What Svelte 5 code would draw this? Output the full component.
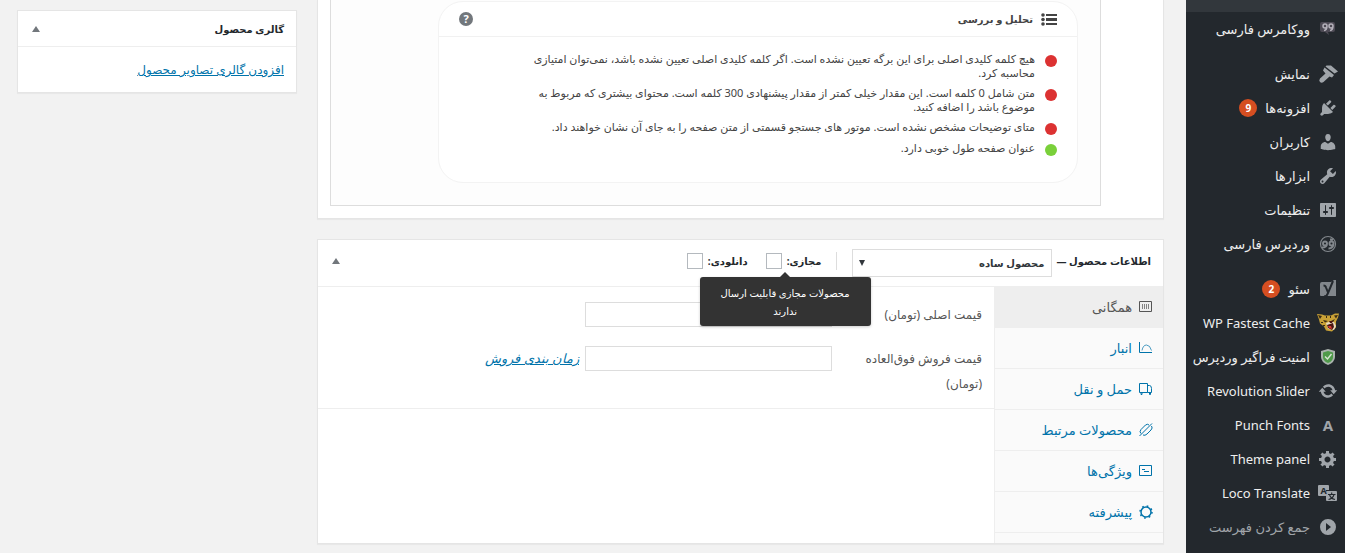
<script>
  const menu = [
    { label: 'ووکامرس فارسی', icon: 'woo' },
    { label: 'نمایش', icon: 'appearance', gap: true },
    { label: 'افزونه‌ها', icon: 'plugins', count: 9 },
    { label: 'کاربران', icon: 'users' },
    { label: 'ابزارها', icon: 'tools' },
    { label: 'تنظیمات', icon: 'settings' },
    { label: 'وردپرس فارسی', icon: 'wpfa' },
    { label: 'سئو', icon: 'yoast', count: 2, gap: true },
    { label: 'WP Fastest Cache', icon: 'cheetah' },
    { label: 'امنیت فراگیر وردپرس', icon: 'shield' },
    { label: 'Revolution Slider', icon: 'update' },
    { label: 'Punch Fonts', icon: 'letter' },
    { label: 'Theme panel', icon: 'generic' },
    { label: 'Loco Translate', icon: 'translation' },
  ];

  // dashicons, 20x20
  const paths = {
    appearance:
      'M8.500 1.500L13 1.500l7 6-3.500 2-9-7zM6.500 3.500l9.500 7.500-2 2.500-2.500-1-6 5.500q-2 1.500-3.500 0t0-3.500l5.500-5-2.500-3z',
    plugins:
      'M13.11 4.36L9.87 7.6 8 5.73l3.24-3.24c.35-.34 1.05-.2 1.56.32.52.51.66 1.21.31 1.55zm-8 1.77l.91-1.12 9.01 9.01-1.19.84c-.71.71-2.63 1.16-3.82 1.16H6.14L4.9 17.26c-.59.59-1.54.59-2.12 0-.59-.58-.59-1.53 0-2.12l1.24-1.24v-3.88c0-1.13.4-3.19 1.09-3.89zm7.26 3.97l3.24-3.24c.34-.35 1.04-.21 1.55.31.52.51.66 1.21.31 1.55l-3.24 3.25z',
    users:
      'M10 9.25c-2.27 0-2.73-3.44-2.73-3.44C7 4.02 7.82 2 9.97 2c2.16 0 2.98 2.02 2.71 3.81 0 0-.41 3.44-2.68 3.44zm0 2.57L12.72 10c2.39 0 4.52 2.33 4.52 4.53v2.49s-3.65 1.13-7.24 1.13c-3.65 0-7.24-1.13-7.24-1.13v-2.49c0-2.25 1.94-4.48 4.47-4.48z',
    tools:
      'M16.68 9.77c-1.34 1.34-3.3 1.67-4.95.99l-5.41 6.52c-.99.99-2.59.99-3.58 0s-.99-2.59 0-3.57l6.52-5.42c-.68-1.65-.35-3.61.99-4.95 1.28-1.28 3.12-1.62 4.72-1.06l-2.89 2.89 2.82 2.82 2.86-2.87c.53 1.58.18 3.39-1.08 4.65zM3.81 16.21c.4.39 1.04.39 1.43 0 .4-.4.4-1.04 0-1.43-.39-.4-1.03-.4-1.43 0-.39.39-.39 1.03 0 1.43z',
    settings:
      'M18 16V4c0-.55-.45-1-1-1H3c-.55 0-1 .45-1 1v12c0 .55.45 1 1 1h14c.55 0 1-.45 1-1zM8 11h1c.55 0 1 .45 1 1s-.45 1-1 1H8v1.5c0 .28-.22.5-.5.5s-.5-.22-.5-.5V13H6c-.55 0-1-.45-1-1s.45-1 1-1h1V5.5c0-.28.22-.5.5-.5s.5.22.5.5V11zm5-2h-1c-.55 0-1-.45-1-1s.45-1 1-1h1V5.5c0-.28.22-.5.5-.5s.5.22.5.5V7h1c.55 0 1 .45 1 1s-.45 1-1 1h-1v5.5c0 .28-.22.5-.5.5s-.5-.22-.5-.5V9z',
    update:
      'M10.2 3.28c3.53 0 6.43 2.61 6.92 6h2.08l-3.5 4-3.5-4h2.32c-.45-1.97-2.21-3.45-4.32-3.45-1.45 0-2.73.71-3.54 1.78L4.95 5.66C6.23 4.2 8.11 3.28 10.2 3.28zm-.4 13.44c-3.52 0-6.43-2.61-6.92-6H.8l3.5-4c1.17 1.33 2.33 2.67 3.5 4H5.48c.45 1.97 2.21 3.45 4.32 3.45 1.45 0 2.73-.71 3.54-1.78l1.71 1.95c-1.28 1.46-3.15 2.38-5.25 2.38z',
    generic:
      'M18 12h-2.18c-.17.7-.44 1.35-.81 1.93l1.54 1.54-2.1 2.1-1.54-1.54c-.58.36-1.23.63-1.91.79V19H8v-2.18c-.68-.16-1.33-.43-1.91-.79l-1.54 1.54-2.12-2.12 1.54-1.54c-.36-.58-.63-1.23-.79-1.91H1V9.03h2.17c.16-.7.44-1.35.8-1.94L2.43 5.55l2.1-2.1 1.54 1.54c.58-.37 1.24-.64 1.93-.81V2h3v2.18c.68.16 1.33.43 1.91.79l1.54-1.54 2.12 2.12-1.54 1.54c.36.59.64 1.24.8 1.94H18V12zm-8.5 1.5c1.66 0 3-1.34 3-3s-1.34-3-3-3-3 1.34-3 3 1.34 3 3 3z',
  };

  const analysis = [
    {
      score: 'bad',
      lines: [
        'هیچ کلمه کلیدی اصلی برای این برگه تعیین نشده است. اگر کلمه کلیدی اصلی تعیین نشده باشد، نمی‌توان امتیازی',
        'محاسبه کرد.',
      ],
    },
    {
      score: 'bad',
      lines: [
        'متن شامل 0 کلمه است. این مقدار خیلی کمتر از مقدار پیشنهادی 300 کلمه است. محتوای بیشتری که مربوط به',
        'موضوع باشد را اضافه کنید.',
      ],
    },
    {
      score: 'bad',
      lines: ['متای توضیحات مشخص نشده است. موتور های جستجو قسمتی از متن صفحه را به جای آن نشان خواهند داد.'],
    },
    { score: 'good', lines: ['عنوان صفحه طول خوبی دارد.'] },
  ];

  const tabs = [
    { id: 'general', label: 'همگانی' },
    { id: 'inventory', label: 'انبار' },
    { id: 'shipping', label: 'حمل و نقل' },
    { id: 'linked', label: 'محصولات مرتبط' },
    { id: 'attributes', label: 'ویژگی‌ها' },
    { id: 'advanced', label: 'پیشرفته' },
  ];

  let activeTab = 'general';
  let regularPrice = '';
  let salePrice = '';
</script>

<div class="admin" dir="rtl" lang="fa">
  <nav class="menu">
    <div class="menu-current"></div>
    <ul>
      {#each menu as item}
        <li class:gap={item.gap}>
          <a href="#{item.icon}">
            <svg class="menu-icon {item.icon}" viewBox="0 0 20 20" aria-hidden="true">
              {#if paths[item.icon]}
                <path d={paths[item.icon]} />
              {:else if item.icon === 'woo'}
                <path d="M4 3h11q2 0 2 2v6q0 2-2 2h-5l1 3-4-3H4q-2 0-2-2V5q0-2 2-2z" fill="#4d4a54" />
                <path d="M9 7a2 2 0 1 0-2 2q2 0 2-2 0 4-3 4.500M15 7a2 2 0 1 0-2 2q2 0 2-2 0 4-3 4.500" fill="none" stroke="#b4b1ba" stroke-width="1.500" />
              {:else if item.icon === 'wpfa'}
                <circle cx="10" cy="10" r="7.500" fill="none" stroke="#82878c" stroke-width="1.200" />
                <path d="M9 9.500a2 2 0 1 0-2 2q2 0 2-2 0 4-5 4M15.500 9.500a2 2 0 1 0-2 2q2 0 2-2 0 5-5 5M12 5.500h3" fill="none" stroke="#82878c" stroke-width="1.900" />
              {:else if item.icon === 'yoast'}
                <path d="M4 3h9l3-2h2v16H3q-1 0-1-1V5q0-2 2-2z" fill="#82878c" />
                <path d="M5.500 6.500q2 0 2.500 2l2 5M15 2l-5 12q-1 3.500-4 3.500" fill="none" stroke="#23282d" stroke-width="2" />
              {:else if item.icon === 'cheetah'}
                <path d="M-1 1l5 .5 3 1h6l4-2 4 0-1 4-2 4v6l-4 4-6-1-2-4-4-3-1-4z" fill="#c9a136" />
                <path d="M0 2l4 1-2 3zM20 2l-4 .5 2 3zM5 7l5 1-3 1.500zM13 8l4-2-2 3zM8 3h1v2H8zM12 3h1v2h-1zM3 9h2v1H3zM5 12h2v1H5z" fill="#3a2c14" />
                <path d="M8 10l3-1 5 0 2 4-2 4-6-1z" fill="#e8dcc0" />
                <path d="M11 8h4l-1 2h-2zM9 12l6-2 1 4-2 3-4-2z" fill="#4b1712" />
                <path d="M10 13l3 0 1 3-3-1z" fill="#d93a30" />
              {:else if item.icon === 'shield'}
                <path d="M10 2l7 2v6q0 5-7 8-7-3-7-8V4z" fill="#a9b3ad" />
                <path d="M10 4l5 1.500V10q0 4-5 6-5-2-5-6V5.500z" fill="#4f9a4a" />
                <path d="M7 9.500l2.500 2.500L13.500 7" fill="none" stroke="#d6e6d2" stroke-width="1.400" />
              {:else if item.icon === 'letter'}
                <text x="10" y="15.500" text-anchor="middle" font-size="15" font-weight="700">A</text>
              {:else}
                <path d="M1 2h9q1 0 1 1v4H8v6H1q-1 0-1-1V3q0-1 1-1z" />
                <path d="M9 8h9q1 0 1 1v8q0 1-1 1H9q-1 0-1-1V9q0-1 1-1z" />
                <text x="5.500" y="11" text-anchor="middle" font-size="9" font-weight="700" fill="#23282d">A</text>
                <path d="M10 11.500h7.500M13.700 9.500v2M16 11.500q-1 4-5.500 5M11.500 11.500q1 4 5.500 5" fill="none" stroke="#23282d" stroke-width="1.100" />
              {/if}
            </svg>
            <span>{item.label}</span>
            {#if item.count}<span class="count">{item.count}</span>{/if}
          </a>
        </li>
      {/each}
    </ul>
    <button class="collapse">
      <svg class="menu-icon" viewBox="0 0 20 20" aria-hidden="true">
        <path fill-rule="evenodd" d="M10 2a8 8 0 1 1 0 16 8 8 0 0 1 0-16zM8 6v8l5-4z" />
      </svg>
      <span>جمع کردن فهرست</span>
    </button>
  </nav>

  <main class="content">
    <div class="primary">
      <section class="postbox seo">
        <div class="seo-inner">
          <div class="analysis">
            <header>
              <svg class="list-icon" viewBox="0 0 16 13" aria-hidden="true">
                <path d="M5 1h11v2H5zM5 5h11v3H5zM5 10h11v2H5z" />
                <circle cx="2" cy="2" r="1.800" /><circle cx="2" cy="6.500" r="1.800" /><circle cx="2" cy="11" r="1.800" />
              </svg>
              <h3>تحلیل و بررسی</h3>
              <button class="help" aria-label="راهنما">?</button>
            </header>
            <ul>
              {#each analysis as result}
                <li>
                  <span class="dot {result.score}"></span>
                  <p>
                    {#each result.lines as line}<span class="line">{line}</span>{/each}
                  </p>
                </li>
              {/each}
            </ul>
          </div>
        </div>
      </section>

      <section class="postbox product">
        <header class="product-head">
          <h2>اطلاعات محصول —</h2>
          <select aria-label="نوع محصول">
            <option>محصول ساده</option>
          </select>
          <div class="types">
            <label class="virtual">
              مجازی:
              <input type="checkbox" />
              <span class="tip" role="tooltip">محصولات مجازی قابلیت ارسال ندارند</span>
            </label>
            <label>
              دانلودی:
              <input type="checkbox" />
            </label>
          </div>
          <button class="toggle" aria-label="بستن">
            <svg viewBox="0 0 8 6" aria-hidden="true"><path d="M4 0l4 6H0z" /></svg>
          </button>
        </header>

        <div class="product-body">
          <ul class="tabs">
            {#each tabs as tab}
              <li>
                <button class:active={activeTab === tab.id} on:click={() => (activeTab = tab.id)}>
                  <svg viewBox="0 0 14 14" aria-hidden="true">
                    {#if tab.id === 'general'}
                      <path d="M.5 1.500h12v10H.5z" />
                      <path d="M3.500 4v5M5.500 4v5M7.500 4v5M9.500 4v5" opacity=".7" />
                    {:else if tab.id === 'inventory'}
                      <path d="M.5 1v10.500H13" />
                      <path d="M3 9.500q1-5.500 4.500-5.500t5 5.500" opacity=".7" />
                    {:else if tab.id === 'shipping'}
                      <path d="M.5 1.500h8v9h-8zM8.500 3.500h2q2 0 2 3v4h-4M2 10.500v2h1v-2M10.500 10.500v2h1v-2" />
                    {:else if tab.id === 'linked'}
                      <path d="M.5 13L13 .5M2 10.500q-2-1.500 0-4l4.500-4.500q2-1.500 3.500 0M4 12q2 1 4-1l4-4q2-2 .5-4" />
                    {:else if tab.id === 'attributes'}
                      <path d="M.5 1.500h12v10H.5zM3 5.500h3M5 7.500h5" />
                    {:else}
                      <circle cx="7" cy="7" r="5" stroke-width="1.500" />
                      <circle cx="7" cy="7" r="6" stroke-width="1.500" stroke-dasharray="1.700 3.010" />
                    {/if}
                  </svg>
                  {tab.label}
                </button>
              </li>
            {/each}
          </ul>
          <div class="panel">
            <div class="fields">
              <div class="field">
                <label for="regular">قیمت اصلی (تومان)</label>
                <input id="regular" type="text" bind:value={regularPrice} />
              </div>
              <div class="field">
                <label for="sale">قیمت فروش فوق‌العاده (تومان)</label>
                <input id="sale" type="text" bind:value={salePrice} />
                <a href="#schedule">زمان بندی فروش</a>
              </div>
            </div>
          </div>
        </div>
      </section>
    </div>

    <aside>
      <section class="postbox gallery">
        <header>
          <h2>گالری محصول</h2>
          <button class="toggle" aria-label="بستن">
            <svg viewBox="0 0 8 6" aria-hidden="true"><path d="M4 0l4 6H0z" /></svg>
          </button>
        </header>
        <div class="gallery-body">
          <a href="#gallery">افزودن گالری تصاویر محصول</a>
        </div>
      </section>
    </aside>
  </main>
</div>

<style>
  :global(body) {
    margin: 0;
    background: #f2f2f2;
  }

  .admin {
    display: flex;
    min-height: 100vh;
    font-family: 'Noto Sans', 'DejaVu Sans', sans-serif;
    font-size: 12px;
    color: #444;
  }

  .admin *,
  .admin {
    box-sizing: border-box;
  }

  ul {
    margin: 0;
    padding: 0;
    list-style: none;
  }

  h2,
  h3,
  p {
    margin: 0;
  }

  button {
    padding: 0;
    border: 0;
    background: none;
    font: inherit;
    color: inherit;
    cursor: pointer;
  }

  a {
    color: #0073aa;
  }

  .menu {
    flex: none;
    width: 159px;
    background: #23282d;
  }

  .menu-current {
    height: 12px;
    background: #32373c;
  }

  .menu .gap {
    margin-top: 11px;
  }

  .menu a,
  .collapse {
    display: flex;
    align-items: center;
    gap: 8px;
    width: 100%;
    height: 34px;
    padding-right: 7px;
    font-size: 13px;
    white-space: nowrap;
    color: #eee;
    text-decoration: none;
  }

  .menu .collapse {
    color: #a0a5aa;
  }

  .menu-icon {
    flex: none;
    width: 20px;
    height: 20px;
    fill: #a0a5aa;
  }

  .menu-icon.cheetah {
    overflow: visible;
  }

  .count {
    width: 18px;
    height: 18px;
    border-radius: 9px;
    background: #d54e21;
    font-size: 10px;
    font-weight: 700;
    line-height: 18px;
    text-align: center;
    color: #fff;
  }

  .content {
    display: flex;
    flex: 1;
    align-items: flex-start;
    gap: 20px;
    min-width: 0;
    padding: 0 22px 0 17px;
  }

  .primary {
    flex: 1;
    min-width: 0;
  }

  aside {
    flex: none;
    width: 280px;
    padding-top: 10px;
  }

  .postbox {
    border: 1px solid #e5e5e5;
    background: #fff;
    box-shadow: 0 1px 1px rgba(0, 0, 0, 0.04);
  }

  .postbox h2 {
    font-size: 10px;
    font-weight: 700;
    color: #23282d;
    white-space: nowrap;
  }

  .seo {
    padding: 0 62px 12px 12px;
    border-top: 0;
  }

  .seo-inner {
    padding: 1px 22px 22px 107px;
    border: 1px solid #ddd;
    border-top: 0;
    background: #fdfdfd;
  }

  .analysis {
    height: 182px;
    border: 1px solid #f3f3f3;
    border-radius: 25px;
    background: #fff;
  }

  .analysis header {
    display: flex;
    align-items: center;
    gap: 8px;
    height: 35px;
    padding: 0 20px;
    border-bottom: 1px solid #f1f1f1;
  }

  .list-icon {
    width: 16px;
    height: 13px;
    fill: #444;
  }

  .analysis h3 {
    font-size: 10px;
    font-weight: 700;
  }

  .help {
    width: 14px;
    height: 14px;
    margin-right: auto;
    border-radius: 50%;
    background: #72777c;
    font-size: 11px;
    font-weight: 700;
    line-height: 14px;
    color: #fff;
  }

  .analysis ul {
    padding: 15px 20px;
  }

  .analysis li {
    display: flex;
    align-items: flex-start;
    gap: 10px;
    margin-bottom: 6px;
  }

  .dot {
    flex: none;
    width: 12px;
    height: 12px;
    margin-top: 3px;
    border-radius: 50%;
  }

  .bad {
    background: #dc3232;
  }

  .good {
    background: #7ad03a;
  }

  .analysis p {
    font-size: 11px;
    line-height: 14px;
  }

  .line {
    display: block;
    white-space: nowrap;
  }

  .product {
    margin-top: 20px;
  }

  .product-head {
    display: flex;
    align-items: center;
    height: 47px;
    padding: 0 12px 4px 14px;
    border-bottom: 1px solid #eee;
  }

  select {
    appearance: none;
    width: 200px;
    height: 28px;
    margin: 4px 5px 0 0;
    padding: 0 6px;
    border: 1px solid #ddd;
    border-radius: 0;
    background: #fff url("data:image/svg+xml,%3Csvg xmlns='http://www.w3.org/2000/svg' viewBox='0 0 6 6'%3E%3Cpath d='M0 0h6L3 6z' fill='%2332373c'/%3E%3C/svg%3E") no-repeat 6px 50% / 6px 6px;
    font: inherit;
    font-size: 10px;
    font-weight: 700;
    color: #32373c;
  }

  .types {
    display: flex;
    gap: 18px;
    height: 18px;
    margin-right: 15px;
    padding-right: 14px;
    border-right: 1px solid #ddd;
  }

  .types label {
    display: flex;
    align-items: center;
    gap: 5px;
    font-size: 10px;
    font-weight: 700;
    color: #23282d;
    white-space: nowrap;
  }

  .virtual {
    position: relative;
  }

  .types input {
    appearance: none;
    width: 16px;
    height: 16px;
    margin: 0;
    border: 1px solid #b4b9be;
    background: #fff;
  }

  .tip {
    position: absolute;
    top: 25px;
    left: -66px;
    z-index: 1;
    width: 171px;
    padding: 7px 16px 6px;
    border-radius: 3px;
    background: #333;
    box-shadow: 0 1px 3px rgba(0, 0, 0, 0.2);
    font-size: 10px;
    font-weight: 400;
    line-height: 18px;
    text-align: center;
    white-space: normal;
    color: #fff;
  }

  .tip::before {
    content: '';
    position: absolute;
    top: -5px;
    left: 80px;
    border: 5px solid transparent;
    border-top: 0;
    border-bottom-color: #333;
  }

  .toggle {
    display: flex;
    margin-right: auto;
  }

  .toggle svg {
    width: 8px;
    height: 6px;
    fill: #72777c;
  }

  .product-body {
    display: flex;
  }

  .tabs {
    flex: none;
    width: 169px;
    padding-bottom: 10px;
    border-left: 1px solid #eee;
    background: #fafafa;
  }

  .tabs button {
    display: flex;
    align-items: center;
    gap: 7px;
    width: 100%;
    height: 41px;
    padding: 0 10px;
    border-bottom: 1px solid #eee;
    font-size: 13px;
    color: #0073aa;
  }

  .tabs .active {
    background: #eee;
    color: #555;
  }

  .tabs svg {
    width: 14px;
    height: 14px;
    fill: none;
    stroke: currentColor;
  }

  .panel {
    flex: 1;
  }

  .fields {
    height: 122px;
    padding: 15px 12px 0;
    border-bottom: 1px solid #eee;
  }

  .field {
    display: flex;
    align-items: flex-start;
    margin-bottom: 19px;
    line-height: 25px;
  }

  .field label {
    width: 150px;
    padding-left: 30px;
    color: #555;
  }

  .field input {
    width: 247px;
    height: 25px;
    padding: 3px;
    border: 1px solid #ddd;
    font: inherit;
  }

  .field a {
    margin-right: 6px;
    font-size: 13px;
    font-style: italic;
  }

  .gallery header {
    display: flex;
    align-items: center;
    height: 36px;
    padding: 0 12px 0 14px;
    border-bottom: 1px solid #eee;
  }

  .gallery-body {
    height: 45px;
    padding: 12px;
    line-height: 22px;
  }
</style>
